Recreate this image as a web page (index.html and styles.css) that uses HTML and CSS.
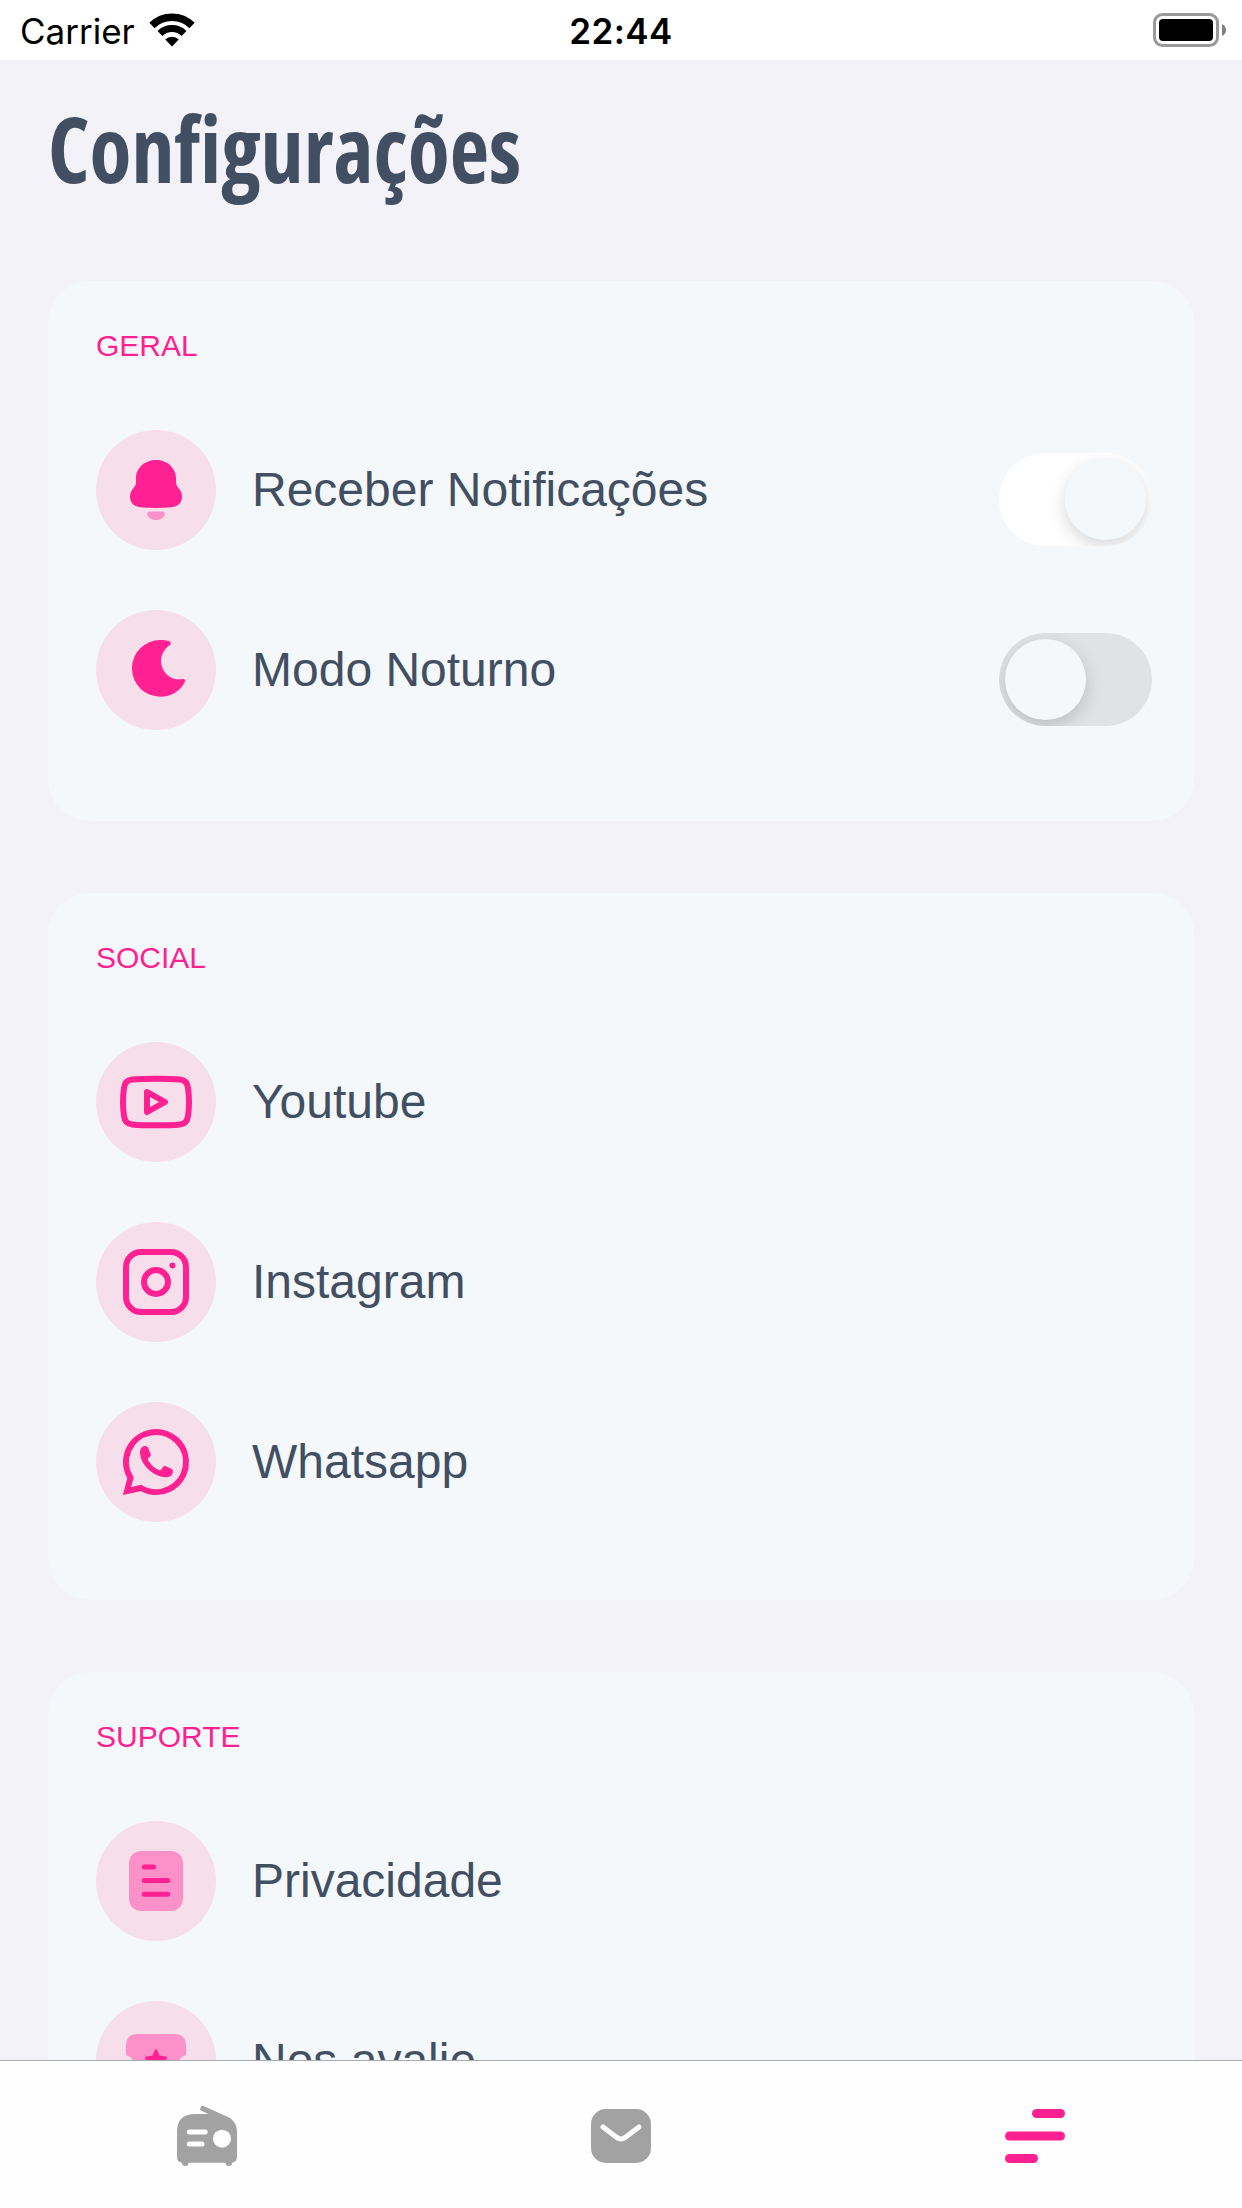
FILE: index.html
```html
<!DOCTYPE html>
<html lang="pt-BR">

<head>
  <meta charset="UTF-8" />
  <meta name="viewport" content="width=device-width, initial-scale=1.0" />
  <title>Configurações</title>
  <link rel="stylesheet" href="styles.css">
</head>

<body>
  <div class="status-bar">
    <div class="carrier">
      <span>Carrier</span>
      <svg class="wifi" width="46" height="34" viewBox="0 0 46 34">
        <path d="M3 12.5 A28.5 28.5 0 0 1 43 12.5" fill="none" stroke="#000" stroke-width="7.5" />
        <path d="M11 20.5 A17 17 0 0 1 35 20.5" fill="none" stroke="#000" stroke-width="7" />
        <path d="M23 33.5 L16.2 26.5 A10 10 0 0 1 29.8 26.5 Z" />
      </svg>
    </div>
    <div class="time">22:44</div>
    <svg class="battery" width="74" height="34" viewBox="0 0 74 34">
      <rect x="1.5" y="1.5" width="63" height="31" rx="8" fill="none" stroke="#999" stroke-width="3" />
      <rect x="6" y="6" width="54" height="22" rx="4" />
      <path d="M69 11 Q73 13 73 17 Q73 21 69 23 Z" fill="#808080" />
    </svg>
  </div>

  <main class="content">
    <h1><span>Configurações</span></h1>

    <section class="card">
      <h2>GERAL</h2>
      <div class="row">
        <svg class="icon" viewBox="0 0 120 120">
          <path fill="#ff2091" d="M60 30 C49 30 40 38 40 48 C40 54 40.200 54.500 37.500 58 C35 61.500 34 63 34 66.500 C34 73 38 76.300 44 77.200 Q60 78.800 76 77.200 C82 76.300 86 73 86 66.500 C86 63 85 61.500 82.500 58 C79.800 54.500 80 54 80 48 C80 38 71 30 60 30 Z" />
          <path fill="#fb91c8" d="M53 81.500 H67 Q69.500 82 68.700 85 C67 88.500 64 90 60 90 C56 90 53 88.500 51.300 85 Q50.500 82 53 81.500 Z" />
        </svg>
        <span class="label">Receber Notificações</span>
        <div class="switch on"><div class="knob"></div></div>
      </div>
      <div class="row">
        <svg class="icon" viewBox="0 0 120 120">
          <path fill="#ff2091" d="M64.300 30 C68 30 70.500 30.400 73 31.100 Q76 32.500 74 35 C68 39 65 45 65 51 C65 61 73 69.400 82.500 69.400 C84.500 69.400 85 69 87 69 Q89.700 69.300 89 71.500 C84.500 81 75 86.700 64.300 86.700 A28.350 28.350 0 0 1 64.300 30 Z" />
        </svg>
        <span class="label">Modo Noturno</span>
        <div class="switch"><div class="knob"></div></div>
      </div>
      <div class="spacer"></div>
    </section>

    <section class="card">
      <h2>SOCIAL</h2>
      <div class="row">
        <svg class="icon line" viewBox="0 0 120 120">
          <path d="M60 36.700 C70 36.700 78 37 84 37.600 C89 38.200 91.500 41 92 46 Q93 53 93 60 Q93 67 92 74 C91.500 79 89 81.800 84 82.400 C78 83 70 83.300 60 83.300 C50 83.300 42 83 36 82.400 C31 81.800 28.500 79 28 74 Q27 67 27 60 Q27 53 28 46 C28.500 41 31 38.200 36 37.600 C42 37 50 36.700 60 36.700 Z" />
          <path d="M51 50 L69 60 L51 70 Z" stroke-linejoin="round" />
        </svg>
        <span class="label">Youtube</span>
      </div>
      <div class="row">
        <svg class="icon line" viewBox="0 0 120 120">
          <rect x="30" y="30" width="60" height="60" rx="15" />
          <circle cx="60" cy="60" r="12" />
          <circle class="dot" cx="76.500" cy="43.500" r="3" />
        </svg>
        <span class="label">Instagram</span>
      </div>
      <div class="row">
        <svg class="icon line" viewBox="0 0 120 120">
          <path d="M45 86 A30 30 0 1 0 34.500 75.800 L31 89 Z" />
          <path class="dot" d="M44 50 C44 46 47 43.800 49 44 Q51.500 44 52.300 46 L54.800 52.500 Q55.200 54 53.500 55 Q51.500 56.300 51.900 57.500 C54 62 58.500 66.500 63.700 68.200 Q65 68.300 66.200 66 Q67.500 63.500 69.200 64 L75.500 66.800 Q77.300 67.800 76.800 70 C76.500 73.500 73.500 75.300 70 75.300 C64 75 58 72.500 53 68 C48 63.500 44 57 44 50 Z" />
        </svg>
        <span class="label">Whatsapp</span>
      </div>
    </section>

    <section class="card">
      <h2>SUPORTE</h2>
      <div class="row">
        <svg class="icon" viewBox="0 0 120 120">
          <rect x="33" y="30" width="54" height="60" rx="12" fill="#fb91c8" />
          <path d="M48.300 46 H57.500 M48.300 59.500 H71.700 M48.300 73.300 H71.700" stroke="#ff2091" stroke-width="5" stroke-linecap="round" />
        </svg>
        <span class="label">Privacidade</span>
      </div>
      <div class="row">
        <svg class="icon" viewBox="0 0 120 120">
          <path fill="#fb91c8" d="M42 33 H78 Q90 33 90 45 V53 Q90 54.700 88 55 Q84 56 83 60 Q84 64 88 65 Q90 65.300 90 67 V75 Q90 87 78 87 H42 Q30 87 30 75 V67 Q30 65.300 32 65 Q36 64 37 60 Q36 56 32 55 Q30 54.700 30 53 V45 Q30 33 42 33 Z" />
          <path fill="#ff2091" stroke="#ff2091" stroke-width="3" stroke-linejoin="round" d="M60 50 L62.600 56 L69.500 57 L64.500 61.500 L66 68 L60 65 L54 68 L55.500 61.500 L50.500 57 L57.400 56 Z" />
        </svg>
        <span class="label">Nos avalie</span>
      </div>
    </section>
  </main>

  <nav class="tab-bar">
    <div class="tab">
      <svg width="60" height="60" viewBox="0 0 60 60">
        <path fill="#a2a2a2" d="M18 8 H31.500 L24.800 5 A2.600 2.600 0 0 1 27 .2 L46.500 9 Q60 13.500 60 26 V51 Q60 56 55 56.700 A3.200 3.200 0 0 1 48.500 56.700 H11.500 A3.200 3.200 0 0 1 5 56.700 Q0 56 0 51 V26 Q0 8 18 8 Z" />
        <path d="M12.300 26 H28.200 M12.300 38 H25" stroke="#fff" stroke-width="5" stroke-linecap="round" />
        <circle cx="45" cy="32.700" r="9" fill="#fff" />
      </svg>
    </div>
    <div class="tab">
      <svg width="60" height="54" viewBox="0 0 60 54">
        <rect width="60" height="54" rx="15" fill="#a2a2a2" />
        <path d="M12 18 L25.500 28.300 Q30 31.700 34.500 28.300 L48 18" fill="none" stroke="#fff" stroke-width="5" stroke-linecap="round" />
      </svg>
    </div>
    <div class="tab">
      <svg width="60" height="54" viewBox="0 0 60 54" fill="#ff2091">
        <rect x="27" y="0" width="33" height="9" rx="4.500" />
        <rect x="0" y="22.500" width="60" height="9" rx="4.500" />
        <rect x="0" y="45" width="33" height="9" rx="4.500" />
      </svg>
    </div>
  </nav>
</body>

</html>
```

FILE: styles.css
```css
* {
  box-sizing: border-box;
}

body {
  margin: 0;
  height: 2208px;
  overflow: hidden;
  background-color: #f3f2f8;
  font-family: "Liberation Sans", Arial, sans-serif;
  color: #424f63;
  display: flex;
  flex-direction: column;
}

.status-bar {
  flex: none;
  height: 60px;
  padding: 0 15px 0 20px;
  background-color: #fff;
  color: #000;
  font-family: Inter, sans-serif;
  font-size: 35px;
  display: grid;
  grid-template-columns: 1fr auto 1fr;
  align-items: center;
}

.carrier {
  display: flex;
  align-items: center;
  gap: 14px;
}

.carrier span,
.time {
  padding-top: 2px;
}

.time {
  margin-right: 5px;
  font-weight: 600;
  letter-spacing: 0.4px;
}

.battery {
  justify-self: end;
}

.content {
  flex: 1;
  min-height: 0;
  overflow: hidden;
  padding: 0 48px;
}

h1 {
  margin: 0 0 71px;
  height: 150px;
  line-height: 175px;
  font-family: "Open Sans", "Noto Sans", sans-serif;
  font-size: 92px;
  font-weight: 700;
  font-stretch: 75%;
}

h1 span {
  display: inline-block;
  transform: scaleX(0.935);
  transform-origin: left;
}

.card {
  background-color: #f4f8fb;
  border-radius: 42px;
  padding: 48px 42px 18px 48px;
  margin-bottom: 72px;
}

h2 {
  margin: 0 0 67px;
  color: #ff2091;
  font-size: 30px;
  line-height: 34px;
  font-weight: 400;
}

.row {
  display: flex;
  align-items: center;
  height: 120px;
  margin-bottom: 60px;
}

.icon {
  width: 120px;
  height: 120px;
  margin-right: 36px;
  border-radius: 50%;
  background-color: #f6deeb;
}

.line {
  fill: none;
  stroke: #ff2091;
  stroke-width: 6;
}

.line .dot {
  fill: #ff2091;
  stroke: none;
}

.label {
  flex: 1;
  padding-bottom: 2px;
  font-size: 48px;
}

.switch {
  width: 153px;
  height: 93px;
  margin-top: 19px;
  padding: 6px;
  border-radius: 47px;
  background-color: #dfe3e5;
  overflow: hidden;
  display: flex;
}

.switch.on {
  background-color: #fff;
  justify-content: flex-end;
}

.knob {
  width: 81px;
  height: 81px;
  border-radius: 50%;
  background-color: #f4f8fb;
  box-shadow: 0 6px 18px rgba(0, 0, 0, 0.16);
}

.spacer {
  height: 13px;
}

.tab-bar {
  flex: none;
  height: 148px;
  padding-top: 3px;
  background-color: #fefefe;
  border-top: 1px solid #a9acb0;
  display: flex;
}

.tab {
  flex: 1;
  display: flex;
  align-items: center;
  justify-content: center;
}
```
